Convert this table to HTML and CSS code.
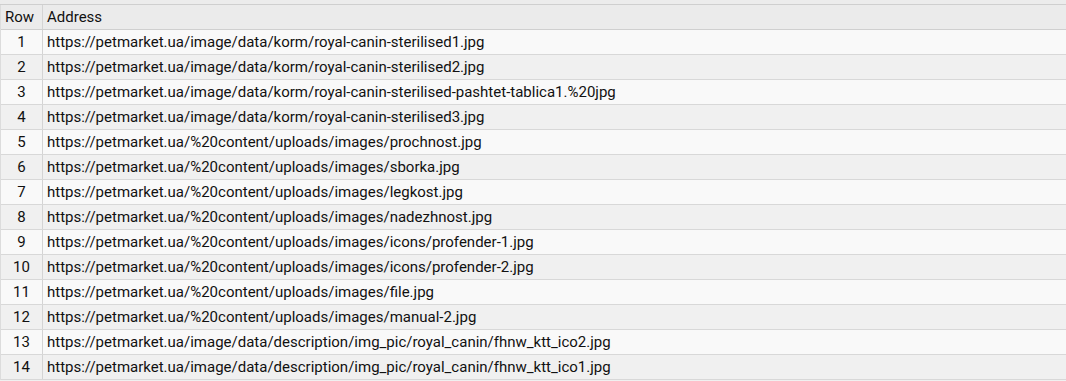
FILE: index.html
```html
<!DOCTYPE html>
<html>
<head>
<meta charset="utf-8">
<link rel="stylesheet" href="styles.css">
</head>
<body>
<div class="topstrip"></div>
<div class="grid">
  <div class="row head"><div class="c1">Row</div><div class="c2">Address</div></div>
  <div class="row odd"><div class="c1 num">1</div><div class="c2">https://petmarket.ua/image/data/korm/royal-canin-sterilised1.jpg</div></div>
  <div class="row even"><div class="c1 num">2</div><div class="c2">https://petmarket.ua/image/data/korm/royal-canin-sterilised2.jpg</div></div>
  <div class="row odd"><div class="c1 num">3</div><div class="c2">https://petmarket.ua/image/data/korm/royal-canin-sterilised-pashtet-tablica1.%20jpg</div></div>
  <div class="row even"><div class="c1 num">4</div><div class="c2">https://petmarket.ua/image/data/korm/royal-canin-sterilised3.jpg</div></div>
  <div class="row odd"><div class="c1 num">5</div><div class="c2">https://petmarket.ua/%20content/uploads/images/prochnost.jpg</div></div>
  <div class="row even"><div class="c1 num">6</div><div class="c2">https://petmarket.ua/%20content/uploads/images/sborka.jpg</div></div>
  <div class="row odd"><div class="c1 num">7</div><div class="c2">https://petmarket.ua/%20content/uploads/images/legkost.jpg</div></div>
  <div class="row even"><div class="c1 num">8</div><div class="c2">https://petmarket.ua/%20content/uploads/images/nadezhnost.jpg</div></div>
  <div class="row odd"><div class="c1 num">9</div><div class="c2">https://petmarket.ua/%20content/uploads/images/icons/profender-1.jpg</div></div>
  <div class="row even"><div class="c1 num">10</div><div class="c2">https://petmarket.ua/%20content/uploads/images/icons/profender-2.jpg</div></div>
  <div class="row odd"><div class="c1 num">11</div><div class="c2">https://petmarket.ua/%20content/uploads/images/file.jpg</div></div>
  <div class="row even"><div class="c1 num">12</div><div class="c2">https://petmarket.ua/%20content/uploads/images/manual-2.jpg</div></div>
  <div class="row odd"><div class="c1 num">13</div><div class="c2">https://petmarket.ua/image/data/description/img_pic/royal_canin/fhnw_ktt_ico2.jpg</div></div>
  <div class="row even"><div class="c1 num">14</div><div class="c2">https://petmarket.ua/image/data/description/img_pic/royal_canin/fhnw_ktt_ico1.jpg</div></div>
</div>
</body>
</html>
```
FILE: styles.css
```css
html, body {
  margin: 0;
  padding: 0;
  background: #f0f0f0;
  font-family: Roboto, "Noto Sans", sans-serif;
  font-size: 15px;
  color: #111;
}
.topstrip {
  height: 4px;
  background: #ececec;
  border-bottom: 1px solid #cfcfcf;
}
.grid {
  display: flex;
  flex-direction: column;
  border-left: 1px solid #dcdcdc;
}
.row {
  display: flex;
  height: 24px;
  border-bottom: 1px solid #d8d8d8;
  align-items: center;
}
.row.head {
  background: #ebebeb;
  border-bottom: 1px solid #cfcfcf;
}
.row.odd { background: #f9f9f9; }
.row.even { background: #f0f0f0; }
.c1 {
  width: 42px;
  box-sizing: border-box;
  padding-left: 4px;
  height: 100%;
  display: flex;
  align-items: center;
  border-right: 1px solid #d4d4d4;
}
.c1.num {
  justify-content: center;
  padding-left: 0;
}
.c2 {
  padding-left: 4px;
  white-space: nowrap;
}
```
